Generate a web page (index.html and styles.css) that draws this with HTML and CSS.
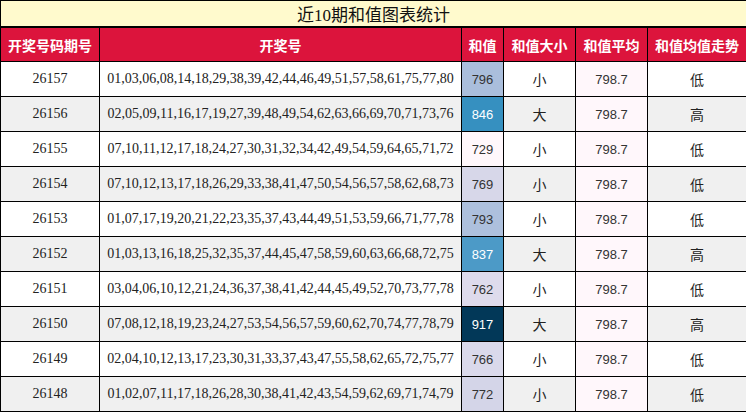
FILE: index.html
```html
<!DOCTYPE html>
<html lang="zh">
<head>
<meta charset="utf-8">
<title>近10期和值图表统计</title>
<link rel="stylesheet" href="styles.css">
</head>
<body>
<table class="stats">
  <colgroup>
    <col class="c-issue">
    <col class="c-nums">
    <col class="c-sum">
    <col class="c-size">
    <col class="c-avg">
    <col class="c-trend">
  </colgroup>
  <thead>
    <tr class="title-row"><th colspan="6" class="title">近10期和值图表统计</th></tr>
    <tr class="head-row">
      <th>开奖号码期号</th>
      <th>开奖号</th>
      <th>和值</th>
      <th>和值大小</th>
      <th>和值平均</th>
      <th>和值均值走势</th>
    </tr>
  </thead>
  <tbody>
    <tr><td class="issue">26157</td><td class="nums">01,03,06,08,14,18,29,38,39,42,44,46,49,51,57,58,61,75,77,80</td><td class="sum" style="background:#aabedc">796</td><td class="cjk">小</td><td class="avg">798.7</td><td class="cjk">低</td></tr>
    <tr class="alt"><td class="issue">26156</td><td class="nums">02,05,09,11,16,17,19,27,39,48,49,54,62,63,66,69,70,71,73,76</td><td class="sum light" style="background:#3690c0">846</td><td class="cjk">大</td><td class="avg">798.7</td><td class="cjk">高</td></tr>
    <tr><td class="issue">26155</td><td class="nums">07,10,11,12,17,18,24,27,30,31,32,34,42,49,54,59,64,65,71,72</td><td class="sum" style="background:#fff7fb">729</td><td class="cjk">小</td><td class="avg">798.7</td><td class="cjk">低</td></tr>
    <tr class="alt"><td class="issue">26154</td><td class="nums">07,10,12,13,17,18,26,29,33,38,41,47,50,54,56,57,58,62,68,73</td><td class="sum" style="background:#d7d7e9">769</td><td class="cjk">小</td><td class="avg">798.7</td><td class="cjk">低</td></tr>
    <tr><td class="issue">26153</td><td class="nums">01,07,17,19,20,21,22,23,35,37,43,44,49,51,53,59,66,71,77,78</td><td class="sum" style="background:#adc0dd">793</td><td class="cjk">小</td><td class="avg">798.7</td><td class="cjk">低</td></tr>
    <tr class="alt"><td class="issue">26152</td><td class="nums">01,03,13,16,18,25,32,35,37,44,45,47,58,59,60,63,66,68,72,75</td><td class="sum light" style="background:#4c9ac7">837</td><td class="cjk">大</td><td class="avg">798.7</td><td class="cjk">高</td></tr>
    <tr><td class="issue">26151</td><td class="nums">03,04,06,10,12,21,24,36,37,38,41,42,44,45,49,52,70,73,77,78</td><td class="sum" style="background:#dedbec">762</td><td class="cjk">小</td><td class="avg">798.7</td><td class="cjk">低</td></tr>
    <tr class="alt"><td class="issue">26150</td><td class="nums">07,08,12,18,19,23,24,27,53,54,56,57,59,60,62,70,74,77,78,79</td><td class="sum light" style="background:#023858">917</td><td class="cjk">大</td><td class="avg">798.7</td><td class="cjk">高</td></tr>
    <tr><td class="issue">26149</td><td class="nums">02,04,10,12,13,17,23,30,31,33,37,43,47,55,58,62,65,72,75,77</td><td class="sum" style="background:#dad9eb">766</td><td class="cjk">小</td><td class="avg">798.7</td><td class="cjk">低</td></tr>
    <tr class="alt"><td class="issue">26148</td><td class="nums">01,02,07,11,17,18,26,28,30,38,41,42,43,54,59,62,69,71,74,79</td><td class="sum" style="background:#d4d5e8">772</td><td class="cjk">小</td><td class="avg">798.7</td><td class="cjk">低</td></tr>
  </tbody>
</table>
</body>
</html>
```
FILE: styles.css
```css
html, body {
  margin: 0;
  padding: 0;
  background: #fff;
}

.stats {
  border-collapse: collapse;
  table-layout: fixed;
  width: 746px;
  font-family: "Liberation Serif", "Noto Sans CJK SC", serif;
  font-size: 14px;
  color: #222;
}

.c-issue { width: 99px; }
.c-nums { width: 362px; }
.c-sum { width: 42px; }
.c-size { width: 72px; }
.c-avg { width: 72px; }
.c-trend { width: 99px; }

.stats th,
.stats td {
  border: 1px solid #000;
  padding: 0;
  text-align: center;
  vertical-align: middle;
  white-space: nowrap;
  overflow: hidden;
}

.title-row .title {
  height: 25px;
  background: #fffacd;
  font-weight: normal;
  font-size: 17px;
  color: #111;
  border-bottom: 2px solid #000;
}

.head-row th {
  height: 33px;
  background: #dc143c;
  color: #fff;
  font-family: "Noto Sans CJK SC", sans-serif;
  font-weight: bold;
  font-size: 14px;
}

.stats tbody td {
  height: 34px;
}

.stats tbody tr.alt td {
  background: #f0f0f0;
}

.issue {
  font-size: 14px;
}

.nums {
  font-size: 14px;
}

.sum {
  font-family: "Liberation Sans", "Noto Sans CJK SC", sans-serif;
  font-size: 13px;
  color: #333;
}

.sum.light {
  color: #fff;
}

.cjk {
  font-family: "Noto Sans CJK SC", sans-serif;
  font-size: 14px;
  color: #222;
}

.stats tbody td.avg,
.stats tbody tr.alt td.avg {
  background: #fff7fb;
  font-family: "Liberation Sans", "Noto Sans CJK SC", sans-serif;
  font-size: 13px;
  color: #333;
}
```
